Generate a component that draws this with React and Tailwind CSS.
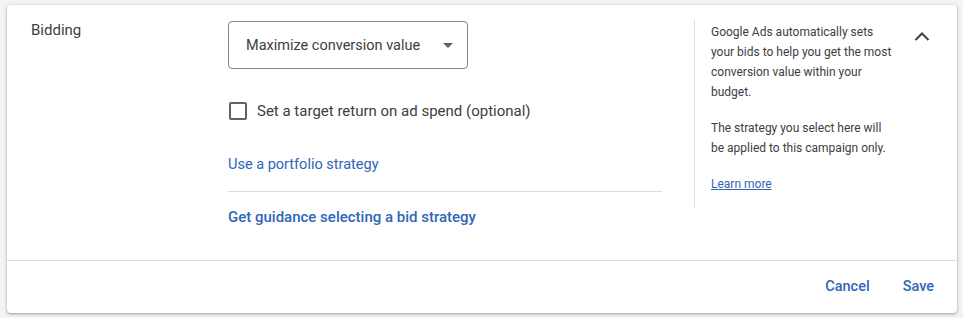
import React from "react";

export default function App() {
  return (
    <div className="w-[963px] h-[318px] bg-[#f1f3f4] pt-[5px] pl-[7px] pr-[6px]" style={{ fontFamily: "Roboto, 'Noto Sans', sans-serif" }}>
      <div className="w-[950px] h-[308px] bg-white rounded-[4px] shadow-[0_1px_2px_rgba(60,64,67,0.3),0_1px_3px_1px_rgba(60,64,67,0.15)] flex flex-col">
        <div className="flex h-[255px]">
          <div className="w-[221px] pl-[24px] pt-[14px] text-[15px] text-[#3c4043]">Bidding</div>
          <div className="w-[434px] pt-[16px] flex flex-col">
            <div className="w-[240px] h-[48px] border border-[#80868b] rounded-[4px] flex items-center pl-[17px] pr-[14px] justify-between">
              <span className="text-[14.5px] text-[#3c4043] mt-[1px]">Maximize conversion value</span>
              <svg width="10" height="5" viewBox="0 0 10 5"><path d="M0 0 L5 5 L10 0 Z" fill="#5f6368" /></svg>
            </div>
            <div className="flex items-center mt-[31px] ml-[1px]">
              <div className="w-[18px] h-[18px] border-2 border-[#5f6368] rounded-[2px]" />
              <span className="ml-[10px] text-[15px] text-[#3c4043]">Set a target return on ad spend (optional)</span>
            </div>
            <div className="mt-[32px] text-[14.5px] text-[#2f66b8] h-[20px] leading-[20px]">Use a portfolio strategy</div>
            <div className="mt-[16px] h-px bg-[#dadce0]" />
            <div className="mt-[15px] text-[15px] font-medium text-[#2f66b8] leading-[20px]">Get guidance selecting a bid strategy</div>
          </div>
          <div className="ml-[32px] mt-[15px] h-[188px] w-px bg-[#dadce0]" />
          <div className="w-[200px] pl-[16px] pt-[17px] text-[12px] leading-[20px] text-[#3c4043]">
            <p>Google Ads automatically sets your bids to help you get the most conversion value within your budget.</p>
            <p className="mt-[16px]">The strategy you select here will be applied to this campaign only.</p>
            <p className="mt-[16px]"><a className="text-[#2f66b8] underline">Learn more</a></p>
          </div>
          <div className="pl-[19px] pt-[26px]">
            <svg width="16" height="10" viewBox="0 0 16 10"><path d="M1.5 9 L8 2.5 L14.5 9" stroke="#3c4043" strokeWidth="2" fill="none" /></svg>
          </div>
        </div>
        <div className="h-px bg-[#dadce0]" />
        <div className="flex-1 flex items-center justify-end pr-[23px] gap-[33px] text-[14.5px] font-medium text-[#2f66b8]">
          <span>Cancel</span>
          <span>Save</span>
        </div>
      </div>
    </div>
  );
}
